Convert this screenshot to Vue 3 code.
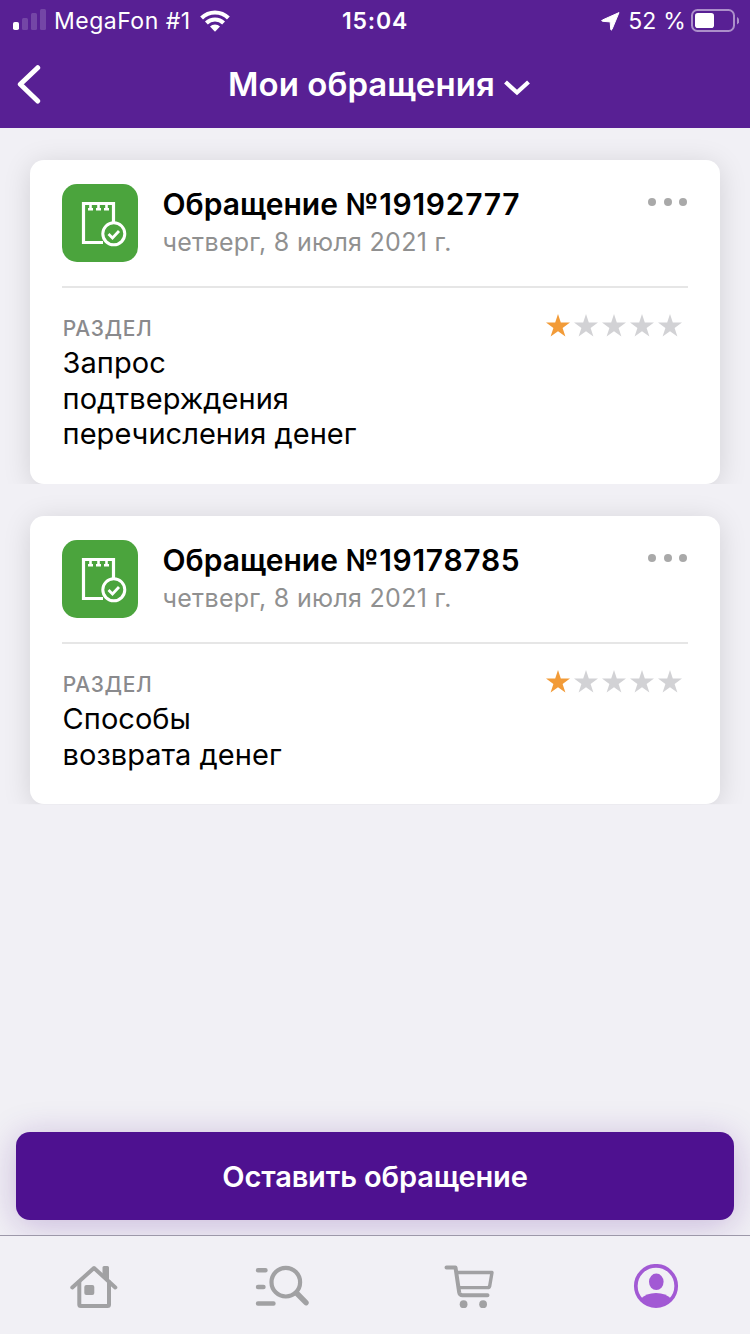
<script setup>
const requests = [
  {
    number: '19192777',
    date: 'четверг, 8 июля 2021 г.',
    section: ['Запрос', 'подтверждения', 'перечисления денег'],
    rating: 1,
  },
  {
    number: '19178785',
    date: 'четверг, 8 июля 2021 г.',
    section: ['Способы', 'возврата денег'],
    rating: 1,
  },
]
</script>

<template>
  <div class="screen">
    <header class="header">
      <div class="status">
        <div class="status-left">
          <svg class="signal" width="34" height="22" viewBox="0 0 34 22" fill="#fff">
            <rect x="0" y="13" width="6" height="8" rx="1.8" />
            <g opacity=".17">
              <rect x="9" y="9" width="6" height="12" rx="1.5" />
              <rect x="18" y="4" width="6" height="17" rx="1.5" />
              <rect x="27" y="0" width="6" height="21" rx="1.5" />
            </g>
          </svg>
          <span class="carrier">MegaFon #1</span>
          <svg class="wifi" width="30" height="22" viewBox="0 0 30 22">
            <g fill="none" stroke="#fff" stroke-width="4">
              <path d="M1.6 8a19 19 0 0 1 26.800 0" />
              <path d="M6.400 13a12.200 12.200 0 0 1 17.200 0" />
            </g>
            <path d="M10 16.600a7 7 0 0 1 10 0L15 21.800z" fill="#fff" />
          </svg>
        </div>
        <span class="clock">15:04</span>
        <div class="status-right">
          <svg width="19" height="19" viewBox="0 0 19 19">
            <path d="M18 .6 11 17.400q-.9 1.600-1.300-.2L9.200 9.900 1.600 9.300q-1.800-.4-.2-1.300z" fill="#fff" stroke="#fff" stroke-width="1" stroke-linejoin="round" />
          </svg>
          <span class="percent">52 %</span>
          <svg class="battery" width="48" height="24" viewBox="0 0 48 24">
            <rect x="1" y="1" width="42" height="21" rx="5.500" fill="none" stroke="#ac8fca" stroke-width="2" />
            <rect x="4" y="4" width="19" height="15" rx="2.800" fill="#fff" />
            <path d="M46 8q2.200 1 2.200 3.700T46 15.500z" fill="#ac8fca" />
          </svg>
        </div>
      </div>
      <div class="navbar">
        <svg class="back" width="26" height="40" viewBox="0 0 26 40">
          <path d="M21.700 2.700 4.300 19.300 21.700 36" fill="none" stroke="#fff" stroke-width="5" stroke-linecap="round" stroke-linejoin="round" />
        </svg>
        <h1 class="title">Мои обращения</h1>
        <svg class="chevron" width="28" height="18" viewBox="0 0 28 18">
          <path d="M2.500 3 14 13.500 25.500 3" fill="none" stroke="#fff" stroke-width="4.200" />
        </svg>
      </div>
    </header>

    <main class="list">
      <article v-for="item in requests" :key="item.number" class="card">
        <div class="card-head">
          <div class="badge">
            <svg width="76" height="78" viewBox="0 0 76 78" fill="none" stroke="#fff">
              <path d="M41 58.500H21.500V19.500H51.500V38.500" stroke-width="3.200" />
              <path d="M28.500 20v5M36.500 20v5M44.500 20v5M26 25.200h5M34 25.200h5M42 25.200h5" stroke-width="2.600" />
              <circle cx="51.800" cy="49.800" r="11" stroke-width="3" />
              <path d="m46.500 50 4 4 6.500-7" stroke-width="2.800" />
            </svg>
          </div>
          <div class="heading">
            <h2 class="number">Обращение <span class="digits">№{{ item.number }}</span></h2>
            <p class="date">{{ item.date }}</p>
          </div>
          <div class="more"><i></i><i></i><i></i></div>
        </div>
        <div class="card-body">
          <div>
            <div class="label">РАЗДЕЛ</div>
            <p class="section">
              <template v-for="(line, i) in item.section" :key="i"><br v-if="i" />{{ line }}</template>
            </p>
          </div>
          <div class="stars">
            <svg v-for="n in 5" :key="n" :class="{ on: n <= item.rating }" width="24" height="23" viewBox="0 0 24 23">
              <path d="M12 0 14.800 8.500H24L16.600 13.900 19.400 22.500 12 17.300 4.600 22.500 7.400 13.900 0 8.500H9.200z" />
            </svg>
          </div>
        </div>
      </article>
    </main>

    <div class="action">
      <button class="submit"><span>Оставить обращение</span></button>
    </div>

    <nav class="tabs">
      <div class="tab">
        <svg width="50" height="46" viewBox="0 0 50 46" fill="none" stroke="#a1a1a3" stroke-width="4" stroke-linecap="round" stroke-linejoin="round">
          <path d="M3.300 23.500 25 4 46.300 23.500" />
          <path d="M10.300 18V40.500Q10.300 42 11.800 42H38.500Q40 42 40 40.500V18" />
          <path d="M35 3.500V11L38.500 14.500V3.500z" stroke-width="3" fill="#a1a1a3" />
          <rect x="15.300" y="21" width="10" height="10" rx="2" fill="#a1a1a3" stroke="none" />
        </svg>
      </div>
      <div class="tab">
        <svg width="56" height="46" viewBox="-1 0 56 46" fill="none" stroke="#a1a1a3" stroke-width="4.400" stroke-linecap="round">
          <path d="M4 6.200h7.500M4 23h5.500M4 39.500h15.500" />
          <circle cx="31.800" cy="18.200" r="14.300" stroke-width="4.200" />
          <path d="M43 29.500 52 38.700" stroke-width="5.400" />
        </svg>
      </div>
      <div class="tab">
        <svg width="52" height="46" viewBox="0 0 52 46" fill="none" stroke="#a1a1a3" stroke-width="4" stroke-linecap="round" stroke-linejoin="round">
          <path d="M3.500 3.500H12.500L16.200 28.500Q16.700 31.300 19.500 31.300H44.500" />
          <path d="M14 8.500H49L46.700 22Q46.300 23.600 44.500 23.600H16" stroke-width="3.400" />
          <g fill="#a1a1a3" stroke="none"><circle cx="20.600" cy="40.200" r="3.900" /><circle cx="40.100" cy="40.200" r="3.900" /></g>
        </svg>
      </div>
      <div class="tab">
        <svg width="46" height="46" viewBox="0 1 46 46">
          <circle cx="23" cy="23" r="20.200" fill="none" stroke="#a259d4" stroke-width="3.700" />
          <ellipse cx="23.300" cy="18.800" rx="7.300" ry="8.300" fill="#a259d4" />
          <path d="M7.500 36Q13 30 23 30T38.500 36Q32 44 23 44T7.500 36z" fill="#a259d4" />
        </svg>
      </div>
    </nav>
  </div>
</template>

<style>
body {
  margin: 0;
}
</style>

<style scoped>
.screen {
  display: flex;
  flex-direction: column;
  width: 750px;
  height: 1334px;
  overflow: hidden;
  background: #f1f0f5;
  color: #000;
  font-family: Inter, "Liberation Sans", sans-serif;
}

h1, h2, p {
  margin: 0;
}

.header {
  height: 128px;
  flex: none;
  background: #582094;
  color: #fff;
}

.status {
  display: grid;
  grid-template-columns: 1fr auto 1fr;
  align-items: center;
  height: 41px;
  padding: 0 11px 0 13px;
  font-size: 23px;
  line-height: 41px;
  white-space: nowrap;
}

.status-left,
.status-right {
  display: flex;
  align-items: center;
}

.status-right {
  justify-content: flex-end;
}

.signal {
  margin: -2px 7px 0 0;
}

.carrier {
  padding-top: 1px;
  letter-spacing: 0.5px;
}

.wifi {
  margin: -1px 0 0 9px;
}

.clock {
  padding-top: 1px;
  margin-left: -2px;
  font-weight: 600;
  letter-spacing: 0.8px;
}

.percent {
  margin: 0 5px 0 8px;
  padding-top: 1px;
  letter-spacing: 0.2px;
}

.battery {
  margin-top: -1px;
}

.navbar {
  display: flex;
  align-items: center;
  height: 87px;
  padding-left: 16px;
}

.title {
  margin: -2px 0 0 186px;
  font-size: 33px;
  font-weight: 600;
  line-height: 40px;
  letter-spacing: 0.05px;
  white-space: nowrap;
}

.chevron {
  margin: 7px 0 0 8px;
}

.list {
  display: flex;
  flex: 1;
  flex-direction: column;
  gap: 32px;
  padding: 32px 30px 0;
}

.card {
  padding: 24px 32px 32px;
  border-radius: 14px;
  background: #fff;
  box-shadow: 0 4px 28px rgba(0, 0, 0, 0.13);
  clip-path: inset(-32px -30px 0 -30px);
}

.card-head {
  display: flex;
  height: 102px;
  border-bottom: 2px solid #e6e6e6;
}

.badge {
  width: 76px;
  height: 78px;
  border-radius: 15px;
  background: #4ba43d;
}

.badge svg {
  display: block;
}

.heading {
  flex: 1;
  margin-left: 24.500px;
  white-space: nowrap;
}

.number {
  margin-top: 1px;
  font-size: 30px;
  font-weight: 600;
  line-height: 38px;
}

.digits {
  letter-spacing: 0.700px;
}

.date {
  padding-top: 1px;
  font-size: 25px;
  line-height: 37px;
  letter-spacing: 0.300px;
  color: #909090;
}

.more {
  display: flex;
  gap: 7.500px;
  margin: 14px 1px 0 0;
}

.more i {
  width: 8px;
  height: 8px;
  border-radius: 50%;
  background: #a9a9a9;
}

.card-body {
  display: flex;
  justify-content: space-between;
  padding-top: 26px;
}

.label {
  padding-left: 0.800px;
  font-size: 21px;
  font-weight: 500;
  line-height: 30px;
  letter-spacing: 0.600px;
  color: #8a8a8d;
}

.section {
  padding: 1px 0 0 0.600px;
  font-size: 29px;
  line-height: 35.667px;
  letter-spacing: 0.030px;
}

.stars {
  display: flex;
  gap: 4px;
  margin-right: 6px;
}

.stars svg {
  fill: #d2d2d5;
}

.stars .on {
  fill: #f29b38;
}

.action {
  flex: none;
  padding: 0 16px 15px;
}

.submit {
  display: block;
  width: 100%;
  height: 88px;
  padding: 1px 0 0;
  border: 0;
  border-radius: 14px;
  background: #4e1190;
  box-shadow: 0 5px 34px rgba(78, 17, 144, 0.25);
  color: #fff;
  font: 600 29px/88px Inter, "Liberation Sans", sans-serif;
  letter-spacing: -0.150px;
}

.tabs {
  position: relative;
  display: grid;
  flex: none;
  grid-template-columns: repeat(4, 1fr);
  box-sizing: border-box;
  height: 99px;
  border-top: 1px solid #9d98a9;
  background: #f1f0f5;
}

.tab {
  display: flex;
  justify-content: center;
  padding-top: 28px;
}
</style>
